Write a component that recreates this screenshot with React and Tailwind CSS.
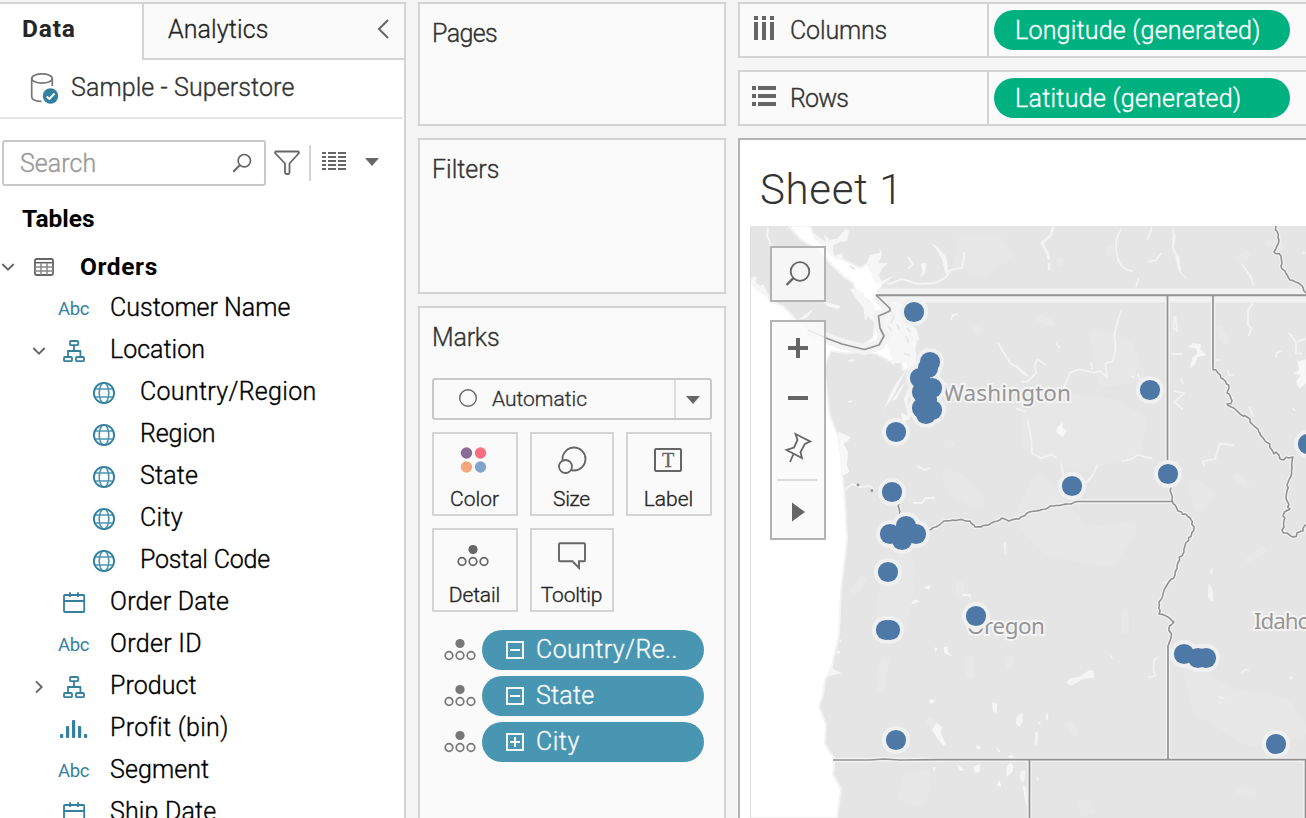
import React from "react";

const TEAL = "#357f9f";
const GRAY = "#666666";

function Svg({ w, h, children, className = "" }) {
  return (
    <svg width={w} height={h} viewBox={`0 0 ${w} ${h}`} fill="none" className={`shrink-0 ${className}`}>
      {children}
    </svg>
  );
}

const Globe = () => (
  <Svg w={24} h={24}>
    <g stroke="#4a96b5" strokeWidth="1.6">
      <ellipse cx="12" cy="12" rx="4.8" ry="10" />
      <path d="M2 8H22M2 16H22" />
    </g>
    <circle cx="12" cy="12" r="10.1" stroke={TEAL} strokeWidth="1.9" />
  </Svg>
);

const Hierarchy = () => (
  <Svg w={24} h={24}>
    <g stroke={TEAL} strokeWidth="1.8">
      <rect x="8" y="2" width="8.2" height="4.2" rx="1" />
      <rect x="2" y="18" width="8" height="4.2" rx="1" />
      <rect x="14" y="18" width="8" height="4.2" rx="1" />
      <path d="M12 6.5V12M6 18V12H18.4V18" />
    </g>
  </Svg>
);

const CalendarIcon = () => (
  <Svg w={24} h={24}>
    <g stroke={TEAL} strokeWidth="1.8">
      <rect x="2" y="4" width="20.2" height="17" rx="0.8" />
      <path d="M2 10H22M8 1.2V6M16 1.2V6" />
    </g>
  </Svg>
);

const Bars = () => (
  <Svg w={30} h={24}>
    <g fill={TEAL}>
      <rect x="1" y="17" width="3.2" height="4" rx="1" />
      <rect x="7" y="9" width="3.2" height="12" rx="1" />
      <rect x="13" y="3" width="3.2" height="18" rx="1" />
      <rect x="19" y="9" width="3.2" height="12" rx="1" />
      <rect x="25" y="17" width="3.2" height="4" rx="1" />
    </g>
  </Svg>
);

const ChevronDown = () => (
  <Svg w={16} h={12}>
    <path d="M2.3 3L8 8.7L13.7 3" stroke={GRAY} strokeWidth="1.9" />
  </Svg>
);

const ChevronRight = () => (
  <Svg w={12} h={16}>
    <path d="M3 2.3L8.7 8L3 13.7" stroke={GRAY} strokeWidth="1.9" />
  </Svg>
);

const DetailIcon = ({ color = "#666666" }) => (
  <Svg w={32} h={24}>
    <circle cx="16" cy="5.5" r="4.6" fill={color} />
    <g stroke={color} strokeWidth="1.7">
      <circle cx="5" cy="17.5" r="3.8" />
      <circle cx="16" cy="17.5" r="3.8" />
      <circle cx="27" cy="17.5" r="3.8" />
    </g>
  </Svg>
);

const Caret = () => (
  <Svg w={16} h={10}>
    <path d="M1 1H15L8 9Z" fill={GRAY} />
  </Svg>
);

const Abc = () => (
  <span className="text-[18.5px] leading-none font-normal tracking-[-0.3px] text-[#357f9f] [-webkit-text-stroke:0px]">Abc</span>
);

const fields = [
  { label: "Customer Name", icon: "abc", track: "tracking-[0px]" },
  { label: "Location", icon: "tree", open: true, track: "tracking-[0px]" },
  { label: "Country/Region", icon: "globe", nested: true, track: "tracking-[0.3px]" },
  { label: "Region", icon: "globe", nested: true, track: "tracking-[-0.1px]" },
  { label: "State", icon: "globe", nested: true, track: "tracking-[0.2px]" },
  { label: "City", icon: "globe", nested: true, track: "tracking-[0.3px]" },
  { label: "Postal Code", icon: "globe", nested: true, track: "tracking-[-0.2px]" },
  { label: "Order Date", icon: "date", track: "tracking-[0.2px]" },
  { label: "Order ID", icon: "abc", track: "tracking-[0.3px]" },
  { label: "Product", icon: "tree", closed: true, track: "tracking-[0.05px]" },
  { label: "Profit (bin)", icon: "bars", track: "tracking-[0.3px]" },
  { label: "Segment", icon: "abc", track: "tracking-[0.1px]" },
  { label: "Ship Date", icon: "date", track: "tracking-[0.15px]" },
];

function Field({ f }) {
  return (
    <div className={`flex h-[42px] shrink-0 items-center ${f.nested ? "pl-[88px]" : "pl-[30px]"}`}>
      {!f.nested && (
        <div className="flex w-[20px] justify-center pr-[3px] pt-[2px]">
          {f.open && <ChevronDown />}
          {f.closed && <ChevronRight />}
        </div>
      )}
      <div className={`flex justify-center pt-[2px] ${f.nested ? "w-[32px]" : "w-[48px]"}`}>
        {f.icon === "abc" && <div className="pt-[1px] pr-[1px]"><Abc /></div>}
        {f.icon === "tree" && <Hierarchy />}
        {f.icon === "globe" && <Globe />}
        {f.icon === "date" && <CalendarIcon />}
        {f.icon === "bars" && <Bars />}
      </div>
      <span className={`pb-[1px] ${f.nested ? "pl-[20px]" : "pl-[12px]"} text-[25px] leading-none text-black ${f.track}`}>{f.label}</span>
    </div>
  );
}

function DataPane() {
  return (
    <section className="mt-[2px] flex w-[406px] shrink-0 flex-col overflow-hidden border-t-2 border-r-2 border-[#d4d4d4] bg-white">
      <div className="flex h-[56px] shrink-0">
        <div className="w-[142px] pt-[12px] pl-[22px] text-[24.5px] leading-[26px] font-bold tracking-[0.8px] text-[#262626] [-webkit-text-stroke:0px]">Data</div>
        <div className="flex flex-1 items-center justify-between border-b-2 border-l-2 border-[#d4d4d4] bg-[#fafafa] pr-[14px] pl-[24px]">
          <span className="pb-[3px] text-[25px] leading-none tracking-[0.1px] text-[#262626]">Analytics</span>
          <Svg w={14} h={20} className="mb-[4px]">
            <path d="M12 1L3 10L12 19" stroke="#666" strokeWidth="2" />
          </Svg>
        </div>
      </div>
      <div className="mr-[1px] flex h-[59px] shrink-0 items-center border-b-2 border-[#e6e6e6] pl-[30px]">
        <Svg w={30} h={34}>
          <g stroke="#777" strokeWidth="1.7">
            <ellipse cx="12" cy="6.5" rx="10.3" ry="4.6" />
            <path d="M1.7 6.5V24.5C1.7 27.5 6 29.3 11.5 29.4M22.3 6.5V14" />
          </g>
          <circle cx="20.5" cy="24" r="7.7" fill={TEAL} />
          <path d="M16.7 24.5L19.4 27L24.5 21.5" stroke="white" strokeWidth="1.9" />
        </Svg>
        <span className="pb-[2px] pl-[11px] text-[25px] leading-none tracking-[0.1px] text-[#333]">Sample - Superstore</span>
      </div>
      <div className="mt-[21px] flex h-[46px] shrink-0 items-center pl-[2px]">
        <div className="flex h-[46px] w-[264px] items-center justify-between rounded-[3px] border-2 border-[#c9c9c9] pr-[12px] pl-[16px]">
          <span className="text-[25px] leading-none tracking-[0.05px] text-[#999]">Search</span>
          <Svg w={20} h={20}>
            <circle cx="12.3" cy="7.7" r="6.2" stroke={GRAY} strokeWidth="1.7" />
            <path d="M7.7 12.3L1.3 18.7" stroke={GRAY} strokeWidth="2" />
          </Svg>
        </div>
        <Svg w={28} h={28} className="ml-[7px] -mt-[3px]">
          <path d="M2.5 3.5H25.5L26 5L16.5 15.5V24.5Q16.5 26 15 26H13.5Q12 26 12 24.5V15.5L2 5Z" stroke={GRAY} strokeWidth="1.8" strokeLinejoin="round" />
        </Svg>
        <div className="ml-[8px] h-[36px] w-[2px] bg-[#d4d4d4]" />
        <Svg w={26} h={20} className="ml-[11px] -mt-[4px]">
          {[1, 5, 9, 13, 17].map((y) => (
            <path key={y} d={`M0 ${y + 1}H4M6 ${y + 1}H14M16 ${y + 1}H24`} stroke={GRAY} strokeWidth="2" />
          ))}
        </Svg>
        <div className="ml-[16px] -mt-[3px]"><Caret /></div>
      </div>
      <div className="h-[61px] shrink-0 pt-[20px] pl-[22px] text-[24.5px] leading-[26px] font-bold tracking-[0px] text-black [-webkit-text-stroke:0px]">Tables</div>
      <div className="flex h-[40px] shrink-0 items-center">
        <ChevronDown />
        <Svg w={22} h={20} className="ml-[17px]">
          <rect x="2" y="2" width="18" height="16" rx="1.4" stroke={GRAY} strokeWidth="1.8" />
          <path d="M2 5.7H20" stroke={GRAY} strokeWidth="1.6" />
          <path d="M2 10H20M2 14H20M8 6V18M14 6V18" stroke="#888" strokeWidth="1.5" />
        </Svg>
        <span className="pl-[25px] text-[24.5px] leading-none font-bold tracking-[0.6px] text-black [-webkit-text-stroke:0px]">Orders</span>
      </div>
      {fields.map((f) => <Field key={f.label} f={f} />)}
    </section>
  );
}

function MarkButton({ label, width, track, children }) {
  return (
    <div className={`flex h-[84px] flex-col items-center border-2 border-[#d4d4d4] ${width}`}>
      <div className="flex h-[52px] items-center">{children}</div>
      <span className={`pt-[1px] pr-[1px] text-[21px] leading-[24px] text-[#262626] ${track}`}>{label}</span>
    </div>
  );
}

function MarkPill({ label, plus, track }) {
  return (
    <div className="flex h-[40px] items-center">
      <DetailIcon color="#777777" />
      <div className="ml-[6px] flex h-[40px] w-[222px] items-center rounded-full bg-[#4996b2] pl-[24px] text-white">
        <Svg w={18} h={18}>
          <rect x="1" y="1" width="16" height="16" stroke="#f4f8fa" strokeWidth="2" />
          <path d={plus ? "M4 9H14M9 4V14" : "M4 9H14"} stroke="white" strokeWidth="2" />
        </Svg>
        <span className={`pb-[1px] pl-[12px] text-[25px] leading-none text-[#f8fbfc] ${track}`}>{label}</span>
      </div>
    </div>
  );
}

function Cards() {
  return (
    <section className="ml-[12px] flex w-[308px] shrink-0 flex-col gap-[12px] pt-[2px] text-[#333]">
      <div className="h-[124px] shrink-0 border-2 border-[#d4d4d4] bg-[#fafafa] pt-[17px] pl-[12px] text-[25px] leading-[26px] tracking-[-0.6px]">Pages</div>
      <div className="h-[156px] shrink-0 border-2 border-[#d4d4d4] bg-[#fafafa] pt-[17px] pl-[12px] text-[25px] leading-[26px] tracking-[0px]">Filters</div>
      <div className="flex flex-1 flex-col border-2 border-b-0 border-[#d4d4d4] bg-[#fafafa] px-[12px] pt-[17px]">
        <span className="text-[25px] leading-[26px] tracking-[-0.2px]">Marks</span>
        <div className="mt-[27px] flex h-[42px] items-stretch rounded-[3px] border-2 border-[#c9c9c9]">
          <div className="flex flex-1 items-center pl-[24px]">
            <Svg w={20} h={20} className="-mt-[3px]">
              <circle cx="10" cy="10" r="8.3" stroke={GRAY} strokeWidth="1.4" />
            </Svg>
            <span className="pl-[14px] text-[21px] leading-none tracking-[0px]">Automatic</span>
          </div>
          <div className="flex w-[36px] items-center justify-center border-l-2 border-[#dedede] pt-[2px]"><Caret /></div>
        </div>
        <div className="mt-[12px] flex flex-wrap gap-[12px]">
          <MarkButton label="Color" width="w-[86px]" track="tracking-[0px]">
            <Svg w={28} h={28} className="mr-[4px] -mt-[1px]">
              <circle cx="7.5" cy="7" r="5.7" fill="#866c96" />
              <circle cx="21.5" cy="7" r="5.7" fill="#f8707f" />
              <circle cx="7.5" cy="21" r="5.7" fill="#f4a67c" />
              <circle cx="21.5" cy="21" r="5.7" fill="#82a4cb" />
            </Svg>
          </MarkButton>
          <MarkButton label="Size" width="w-[84px]" track="tracking-[-0.3px]">
            <Svg w={30} h={30} className="mt-[1px]">
              <circle cx="17" cy="13" r="11.5" stroke={GRAY} strokeWidth="1.8" />
              <circle cx="8.5" cy="20.5" r="6.5" fill="#fafafa" stroke={GRAY} strokeWidth="1.8" />
            </Svg>
          </MarkButton>
          <MarkButton label="Label" width="w-[86px]" track="tracking-[0px]">
            <div className="mr-[2px] flex h-[24px] w-[28px] items-center justify-center rounded-[2px] border-2 border-[#666] font-['Liberation_Serif',serif] text-[20px] leading-none text-[#666]">T</div>
          </MarkButton>
          <MarkButton label="Detail" width="w-[86px]" track="tracking-[-0.1px]">
            <div className="pr-[4px]"><DetailIcon /></div>
          </MarkButton>
          <MarkButton label="Tooltip" width="w-[84px]" track="tracking-[-0.2px]">
            <Svg w={30} h={30}>
              <path d="M3 2.3H27Q28 2.3 28 3.3V19.3Q28 20.3 27 20.3H22V27L15.5 20.3H3Q2 20.3 2 19.3V3.3Q2 2.3 3 2.3Z" stroke={GRAY} strokeWidth="1.9" />
            </Svg>
          </MarkButton>
        </div>
        <div className="mt-[18px] ml-[12px] flex flex-col gap-[6px]">
          <MarkPill label="Country/Re.." track="tracking-[0.4px]" />
          <MarkPill label="State" track="tracking-[0.25px]" />
          <MarkPill label="City" plus track="tracking-[0.5px]" />
        </div>
      </div>
    </section>
  );
}

function Shelf({ label, pill, track, labelTrack, children }) {
  return (
    <div className="flex h-[56px] shrink-0 border-2 border-r-0 border-[#d4d4d4] bg-[#fafafa]">
      <div className="flex w-[249px] items-center border-r-2 border-[#d4d4d4] pl-[12px]">
        {children}
        <span className={`pl-[14px] text-[25px] leading-none text-[#333] ${labelTrack}`}>{label}</span>
      </div>
      <div className="flex items-center pl-[5px]">
        <div className={`flex h-[40px] w-[296px] items-center rounded-full bg-[#00b180] pl-[21px] text-[25px] leading-none text-white ${track}`}>{pill}</div>
      </div>
    </div>
  );
}

const points = [
  [914, 312], [930, 362], [928, 368], [920, 378], [932, 388], [922, 392], [927, 400], [922, 408], [932, 410], [926, 414],
  [896, 432], [892, 492], [1150, 390], [1168, 474], [1072, 486], [906, 526], [890, 534], [916, 534], [902, 540],
  [888, 572], [886, 630], [890, 630], [976, 616], [896, 740], [1184, 654], [1198, 658], [1206, 658], [1276, 744], [1308, 444],
];

const straight = [
  "M876 295L890 308.5L890 311L878.5 316L880 328L884 336L879 345L864.5 349.5L842 344L826 338L808 330",
  "M1167.5 295V471",
  "M1213 295V366",
  "M1077 501.5H1173M1168 646V760",
  "M833 760L870 760L884 759L900 760L940 759.7H1306M1029.5 760V820M1305.5 760V820",
];

// River courses get small deterministic meanders between their survey points.
function meander(pts, amount = 1.7) {
  let seed = 7;
  const rand = () => ((seed = (seed * 16807) % 2147483647) / 2147483647) * 2 - 1;
  let d = `M${pts[0][0]} ${pts[0][1]}`;
  for (let i = 1; i < pts.length; i++) {
    const [ax, ay] = pts[i - 1];
    const [bx, by] = pts[i];
    const steps = Math.max(1, Math.round(Math.hypot(bx - ax, by - ay) / 3));
    for (let s = 1; s < steps; s++) {
      const t = s / steps;
      d += `L${(ax + (bx - ax) * t + rand() * amount).toFixed(1)} ${(ay + (by - ay) * t + rand() * amount).toFixed(1)}`;
    }
    d += `L${bx} ${by}`;
  }
  return d;
}

const rivers = [
  meander([[1213, 366], [1218, 373], [1223, 379], [1229, 388], [1227, 393], [1232, 401], [1227, 404], [1235, 409], [1240, 414], [1247, 417], [1253, 425], [1260, 433], [1265, 441], [1272, 450], [1274, 454], [1276, 452], [1279, 455], [1280, 459], [1289, 458], [1293, 457], [1292, 468], [1287, 485], [1286, 497], [1290, 509], [1283, 516], [1284, 527], [1282, 530], [1287, 533], [1293, 537], [1297, 533], [1303, 531], [1308, 525]], 1.7),
  meander([[1276, 226], [1279, 240], [1274, 252], [1281, 256], [1281, 266], [1290, 280], [1300, 284], [1306, 293]], 1.2),
  meander([[899, 503], [899.5, 514]], 0.8),
  meander([[929, 530], [936, 527], [944, 521], [958, 520], [970, 521], [975, 527], [989, 525], [1002, 518], [1009, 521], [1019, 519], [1027, 513], [1046, 509], [1050, 506], [1071, 504], [1077, 501.5]], 0.9),
  meander([[1171, 487], [1172, 500], [1178, 511], [1190, 518], [1194, 527], [1184, 549], [1177, 566], [1175, 575], [1167, 585], [1159, 602], [1159, 614], [1168, 617], [1174, 622], [1169, 628], [1171, 638], [1168, 646]], 1.2),
];

function TerrainMap() {
  return (
    <svg width="556" height="592" viewBox="750 226 556 592" fill="none" className="block">
      <rect x="750" y="226" width="556" height="592" fill="#e5e5e5" />
      <g fill="#e7e7e7" stroke="#e7e7e7" strokeWidth="14" strokeLinejoin="round">
        <path d="M1030 415L1060 400L1110 405L1140 422L1135 450L1080 465L1030 445Z" />
        <path d="M888 580L905 555L908 575L900 630L885 635L882 610Z" />
        <path d="M1040 480L1085 535L1130 528L1110 560L1050 550L1020 520Z" />
        <path d="M1190 672L1230 695L1285 705L1300 730L1250 740L1200 710Z" />
        <path d="M1095 335L1125 345L1138 375L1105 380Z" />
        <path d="M965 240L995 240L1005 256L980 270L960 262Z" />
        <path d="M908 782L924 776L920 800L905 795Z" />
        <path d="M1195 487L1208 495L1200 505Z" />
        <path d="M948 475L965 485L978 500L955 490Z" />
        <path d="M1085 800L1088 815" />
      </g>
      <g stroke="#e8e8e8" strokeWidth="8" strokeLinecap="round">
        <path d="M977 329V331M947 443L950 444M1060 261V263M1110 250V252M1240 259L1246 255M1220 330L1225 340M1270 243L1280 246M930 722L938 728M1071 725L1074 732M970 660V675M1125 615V630M1238 478L1245 484M960 585V595M855 590L862 580M1240 790L1252 793M885 660L880 690M1010 660V664M1250 560L1262 550M1040 318L1050 322" />
      </g>
      <path d="M750 818V281L757 289L767 293L770 301L783 306L790 313L797 321L808 329L820 333L830 338L845 344L863 345L873 338L875 326L878 319L874 309L870 302L864 297L856 291L853 283L843 276L828 261L817 249L800 239L789 226H810L815 238L824 246L833 256L842 259L852 264L860 268L867 264L872 270L878 276L882 284L879 291L884 296L893 301L907 306L902 318L906 328L917 336L915 348L906 358L909 369L903 370L901 360L890 361L877 354L863 352L845 353L831 351L826 362L825 372L827 392L830 416L838 436L841 455L842 472L845 500L847 538L846 550L841 590L839 635L831 670L825 680L823 695L819 706L826 725L825 744L835 760L833 774L841 789L837 818Z" fill="white" stroke="#f3f3f3" strokeWidth="2" />
      <g transform="translate(750 226) scale(.33333)" fill="#f6f6f6">
        <path d="M0 165L12 150L18 170L30 180L40 175L50 195L55 215L20 195ZM8 150L20 155L15 170Z" />
        <path d="M315 185L340 200L350 225L375 240L370 275L385 285L380 300L355 270L345 285L340 245L320 220L300 190Z" />
        <path d="M350 115L358 88L390 80L388 62L396 85L385 112L415 110L395 130L385 150L395 165L430 150L400 175L375 170Z" />
        <path d="M190 20L215 40L228 48L222 25L240 42L262 38L285 10L298 12L290 45L268 48L248 60L252 90L275 82L280 95L258 100L235 80L220 60L200 45Z" />
        <path d="M405 235L455 230L470 285L500 310L508 340L488 350L500 385L495 420L480 440L470 410L430 412L400 330Z" />
        <path d="M470 430L452 465L430 510L400 553L412 525L428 490L445 462ZM455 480L465 470L440 520L425 525ZM495 440L505 435L498 480L478 500L472 535L485 560L478 580L460 585L452 560L475 570L462 520L480 470Z" />
        <path d="M542 50L565 65L588 92L597 142L586 142L576 100L560 70ZM512 112L530 112L524 142L510 155L518 135Z" />
        <path d="M215 225L272 240L265 248L235 242Z" />
        <path d="M192 247L175 270L160 280H145L172 262ZM420 405L435 400L430 418Z" />
      </g>
      <g transform="translate(750 226) scale(.33333)" stroke="#e5e5e5" strokeWidth="5">
        <path d="M425 258L432 275L422 290M440 295L450 312M468 330L476 352M462 382L480 390M372 205L385 215M300 120L315 130M470 305L480 318M415 300L425 315M405 262L410 275" />
      </g>
      <path d="M768 228L767 235L773 250M887 283L890 284L902 279L918 284L935 283L945 278L951 270L962 268L964 258L964 252" stroke="#f4f4f4" strokeWidth="2" />
      <path d="M908 257L913 264L908 269M845 490L852 484L860 487L870 486L875 491M917 466L925 470L930 468M913 503L922 503L926 498L935 498M951 320L953 315L958 314M848 361L855 360M848 402L852 401M998 343L1010 363L1020 369L1028 376M843 437L848 440L842 444" stroke="#f4f4f4" strokeWidth="1.8" />
      <g transform="translate(1016 220) scale(.33333)" stroke="#f3f3f3" strokeWidth="5">
        <path d="M112 20L105 45L78 70L96 102L98 118M99 128V150" strokeWidth="8" />
        <path d="M318 25Q290 60 305 115Q315 150 350 154M408 22L393 60M395 126L420 120L437 99" />
        <path d="M471 20L478 50L472 85L489 110L495 160L513 178L487 149L478 105L469 86Z" fill="#f3f3f3" strokeWidth="2" />
        <path d="M368 175L360 202M678 132L704 170L712 195" />
        <path d="M318 268L306 300L295 345L299 385L290 425L268 430L272 470L250 452L235 458L190 448L162 458L145 500M225 425L230 450M0 435L18 460L38 468M90 435L65 418L56 435L60 460L35 485L15 485" />
        <path d="M35 598L46 660L48 700L75 715L108 703L122 715M318 725L345 718L365 705L408 715M135 730L142 765M245 733L228 770L210 788M655 676L612 670L597 717L580 720L560 725L565 740" />
        <path d="M120 370L132 385M365 462L372 480M345 470H355" />
        <path d="M710 250L696 270V315L706 325L698 348M818 338L840 365V400H858M845 365L870 355M475 290L472 325L484 332L478 288" />
        <path d="M465 402H500M472 512L505 520L475 545L500 568M495 478L502 492M635 450L640 465L655 465M780 412V400L798 392" />
        <path d="M515 382L530 370L555 372L552 388L572 405L545 412L535 435L522 445L530 412L545 400L540 385Z" fill="#f6f6f6" stroke="none" />
        <path d="M845 425L870 418V490L850 505L840 485L855 465L832 460L850 450ZM125 620L138 608L140 625L152 632L140 650L120 635Z" fill="#f8f8f8" strokeWidth="1" />
        <path d="M0 565L28 575M830 565L838 572M600 420H608M860 99H870M700 560L712 590" />
      </g>
      <g transform="translate(740 540) scale(.33333)" fill="#f6f6f6">
        <path d="M590 548L605 560L603 580L618 612L610 617L595 600L576 570Z" />
        <path d="M757 485L772 492L770 520L758 513ZM830 530L845 522L848 545L838 560L828 552ZM800 680L810 668L820 675L818 695L800 710ZM804 650L815 643L825 655H800Z" />
        <path d="M650 670L672 690L660 692ZM700 680L720 672V695L705 698ZM842 695L855 690L853 725L840 718ZM778 720L784 740L770 737ZM708 615L722 620L720 628L710 627ZM767 617L783 635L775 636ZM578 682L588 682L583 695ZM568 478L584 480L580 490H569Z" />
        <path d="M512 190L525 178L540 184L520 192ZM552 142L574 136L566 150ZM582 322L592 325L587 338ZM612 320L625 320L622 332L636 350L612 338Z" />
        <path d="M792 8H797V42L794 40ZM668 163H692V180L685 168H668ZM444 42L453 50L450 52Z" />
        <path d="M848 735L858 740L863 800L857 790Z" />
        <path d="M262 410L275 380L285 390L305 400L280 405ZM290 330L302 335L295 345ZM298 300L306 298L302 308Z" />
      </g>
      <g transform="translate(740 220) scale(.33333)" fill="#f8f8f8">
        <path d="M295 635L332 652L310 668L325 700L320 735L328 755L308 768L300 700Z" />
      </g>
      <g transform="translate(1016 540) scale(.33333)" fill="#f4f4f4">
        <path d="M150 428L162 415L190 410L220 390L232 393L236 413L205 415L165 438Z" />
        <path d="M5 525L20 520L18 545L8 560ZM90 522L98 520L95 540L88 538ZM58 578L66 575L64 615L56 612ZM64 548L74 545L72 555ZM14 695L24 690L25 722L15 725ZM22 735L30 745L36 800L28 790ZM62 708L69 720L63 722ZM283 342L292 358L284 356Z" />
        <path d="M578 130L590 150L592 182L585 185L576 170ZM583 90L590 85V100L582 102ZM602 470L626 478V474L608 468ZM600 482L618 488L614 492ZM820 408L830 412L826 422Z" />
        <path d="M427 350L414 360L412 388L418 408L396 412M675 400L690 388L698 392M437 130L455 124" stroke="#f1f1f1" strokeWidth="5" fill="none" />
      </g>
      <g stroke="#f2f2f2" strokeLinejoin="round">
        <path d="M877 295.5H1306" strokeWidth="14" />
        {straight.map((d, i) => <path key={d} d={d} strokeWidth={i === 0 ? 11 : 4.5} />)}
        {rivers.map((d) => <path key={d} d={d} strokeWidth="4" />)}
      </g>
      <g stroke="#929292" strokeWidth="1.6" strokeLinejoin="round">
        <path d="M876 295.2H1306" strokeWidth="2" />
        {straight.map((d) => <path key={d} d={d} strokeWidth="1.7" />)}
        {rivers.map((d) => <path key={d} d={d} />)}
        <circle cx="858" cy="485" r=".6" />
        <circle cx="872" cy="490.5" r=".7" />
      </g>
      <g fill="#969696" stroke="#f4f4f4" strokeWidth="4" paintOrder="stroke" fontFamily="'Noto Sans', sans-serif" fontSize="22.5" fontWeight="400">
        <text x="943" y="401" textLength="128">Washington</text>
        <text x="967" y="634" textLength="78">Oregon</text>
        <text x="1254" y="629" textLength="57">Idaho</text>
      </g>
      <g fill="#f0f0f0">{points.map(([x, y], i) => <circle key={i} cx={x} cy={y} r="14" />)}</g>
      <g fill="#4e79a7">{points.map(([x, y], i) => <circle key={i} cx={x} cy={y} r="10.1" />)}</g>
      <path d="M750.5 226V818" stroke="#dfdfdf" />
    </svg>
  );
}

function Worksheet() {
  return (
    <main className="ml-[12px] flex min-w-0 flex-1 flex-col gap-[12px] overflow-hidden pt-[2px]">
      <Shelf label="Columns" labelTrack="tracking-[-0.15px]" pill="Longitude (generated)" track="tracking-[0.22px]">
        <Svg w={24} h={28} className="-mt-[4px]">
          {[2, 10, 18].map((x) => (
            <path key={x} d={`M${x} 2h4v4h-4zM${x} 8h4v18h-4z`} fill={GRAY} />
          ))}
        </Svg>
      </Shelf>
      <Shelf label="Rows" labelTrack="tracking-[-0.8px]" pill="Latitude (generated)" track="tracking-[0.28px]">
        <Svg w={24} h={24} className="-mt-[4px]">
          {[2, 10, 18].map((y) => (
            <path key={y} d={`M0 ${y}h4v4h-4zM6 ${y}h18v4h-18z`} fill={GRAY} />
          ))}
        </Svg>
      </Shelf>
      <div className="flex min-h-0 flex-1 flex-col border-t-2 border-l-2 border-[#b3b3b3] bg-white pl-[10px]">
        <h1 className="h-[86px] shrink-0 pt-[26px] pl-[10px] text-[42px] leading-[48px] font-light tracking-[0.7px] text-[#333] [-webkit-text-stroke:0px]">Sheet 1</h1>
        <div className="relative shrink-0">
          <TerrainMap />
          <div className="absolute top-[20px] left-[20px] flex flex-col gap-[18px]">
            <div className="flex h-[56px] w-[56px] items-center justify-center border-2 border-[#b3b3b3] bg-[#fafafa]/80">
              <Svg w={28} h={28}>
                <circle cx="16" cy="11.5" r="9.3" stroke={GRAY} strokeWidth="1.8" />
                <path d="M9.3 18.2L2.5 25" stroke={GRAY} strokeWidth="2.4" />
              </Svg>
            </div>
            <div className="flex h-[220px] w-[56px] flex-col items-center border-2 border-[#b3b3b3] bg-[#fafafa]/85 pt-[15px]">
              <Svg w={22} h={22}><path d="M1 11H21M11 1V21" stroke={GRAY} strokeWidth="4" /></Svg>
              <Svg w={22} h={22} className="mt-[28px]"><path d="M1 11H21" stroke={GRAY} strokeWidth="4" /></Svg>
              <Svg w={32} h={34} className="mt-[22px] ml-[1px]">
                <path d="M12.5 3L27.2 10.5L21.8 13L17.5 21L19 27L3.5 19L11 16.5L14.5 9ZM10.5 23L7 31" stroke={GRAY} strokeWidth="1.8" />
              </Svg>
              <div className="mt-[14px] mr-[2px] h-[2px] w-[40px] bg-[#dcdcdc]" />
              <Svg w={16} h={22} className="mt-[20px]"><path d="M2 1.5V20.5L15 11Z" fill={GRAY} /></Svg>
            </div>
          </div>
        </div>
      </div>
    </main>
  );
}

export default function App() {
  return (
    <div className="flex h-[818px] w-[1306px] overflow-hidden bg-[#f5f5f5] font-['Roboto',sans-serif] font-light whitespace-nowrap [-webkit-text-stroke:0.35px]">
      <DataPane />
      <Cards />
      <Worksheet />
    </div>
  );
}
